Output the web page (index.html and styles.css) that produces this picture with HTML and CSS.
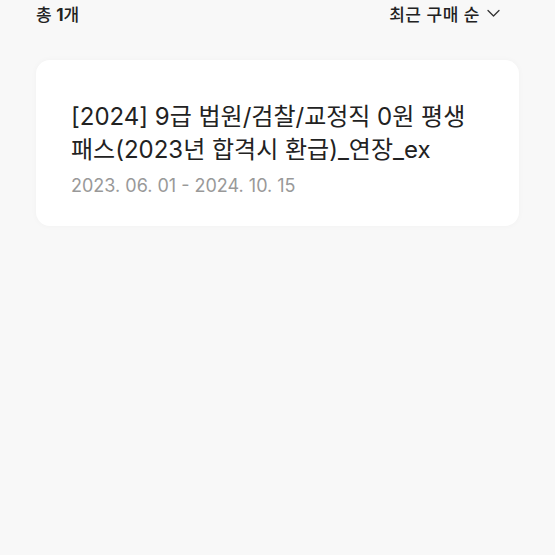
FILE: index.html
```html
<!DOCTYPE html>
<html lang="ko">
<head>
    <meta charset="UTF-8">
    <meta name="viewport" content="width=device-width, initial-scale=1.0">
    <title>구매 내역</title>
    <link rel="stylesheet" href="styles.css">
</head>
<body>
    <div class="list-header">
        <p class="count">총 <strong>1</strong>개</p>
        <button class="sort-btn">
            최근 구매 순
            <svg width="13" height="9" viewBox="0 0 13 9" fill="none">
                <path d="M1 1.5 L6.5 7 L12 1.5" stroke="#333" stroke-width="1.3" stroke-linecap="round" stroke-linejoin="round"/>
            </svg>
        </button>
    </div>

    <div class="purchase-list">
        <div class="purchase-card">
            <p class="title">[2024] 9급 법원/검찰/교정직 0원 평생 패스(2023년 합격시 환급)_연장_ex</p>
            <p class="period">2023. 06. 01 - 2024. 10. 15</p>
        </div>
    </div>
</body>
</html>
```

FILE: styles.css
```css
/* Global Reset */
* {
    margin: 0;
    padding: 0;
    box-sizing: border-box;
    font-family: Inter, 'Noto Sans CJK KR', sans-serif;
}

body {
    background: #f8f8f8;
    color: #222;
    height: 100vh;
}

/* Header */
.list-header {
    display: flex;
    justify-content: space-between;
    align-items: center;
    height: 26px;
    padding: 0 55px 0 36px;
}

.count {
    font-size: 17px;
    font-weight: 500;
    color: #222;
}

.count strong {
    font-weight: 700;
}

.sort-btn {
    display: flex;
    align-items: center;
    gap: 7px;
    border: none;
    background: none;
    font-size: 17px;
    font-weight: 500;
    color: #222;
    letter-spacing: 0.5px;
    cursor: pointer;
}

/* Card list */
.purchase-list {
    padding: 34px 36px 0;
}

.purchase-card {
    background: #fff;
    border-radius: 14px;
    padding: 40px 35px 0;
    height: 166px;
    box-shadow: 0 0 6px rgba(0, 0, 0, 0.03);
}

.title {
    font-size: 24px;
    line-height: 33px;
    font-weight: 400;
    color: #222;
    word-break: keep-all;
}

.period {
    margin-top: 8px;
    font-size: 18px;
    line-height: 24px;
    color: #999;
}
```
